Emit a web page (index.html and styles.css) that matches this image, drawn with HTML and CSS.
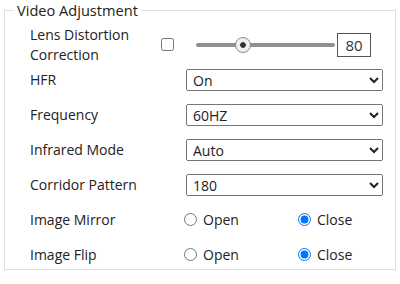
FILE: index.html
```html
<!DOCTYPE html>
<html>
<head>
<meta charset="utf-8">
<link rel="stylesheet" href="styles.css">
</head>
<body>
<fieldset class="panel">
  <legend class="panel-title">Video Adjustment</legend>
  <div class="row">
    <div class="label label-lens">Lens Distortion Correction</div>
    <input type="checkbox" class="check">
    <input type="range" class="slider" min="0" max="255" value="80">
    <input type="text" class="num" value="80">
  </div>
  <div class="row">
    <div class="label">HFR</div>
    <select class="sel"><option>On</option></select>
  </div>
  <div class="row">
    <div class="label">Frequency</div>
    <select class="sel"><option>60HZ</option></select>
  </div>
  <div class="row">
    <div class="label">Infrared Mode</div>
    <select class="sel"><option>Auto</option></select>
  </div>
  <div class="row">
    <div class="label">Corridor Pattern</div>
    <select class="sel"><option>180</option></select>
  </div>
  <div class="row">
    <div class="label">Image Mirror</div>
    <label class="opt opt-first"><input type="radio" name="mirror" class="radio">Open</label>
    <label class="opt"><input type="radio" name="mirror" class="radio" checked>Close</label>
  </div>
  <div class="row">
    <div class="label">Image Flip</div>
    <label class="opt opt-first"><input type="radio" name="flip" class="radio">Open</label>
    <label class="opt"><input type="radio" name="flip" class="radio" checked>Close</label>
  </div>
</fieldset>
</body>
</html>
```

FILE: styles.css
```css
html, body {
  margin: 0;
  padding: 0;
  background: #fff;
}
body {
  font-family: "Open Sans", "Noto Sans", sans-serif;
  font-size: 14px;
  color: #222;
}
.panel {
  margin: 0 4px;
  width: 392px;
  min-width: 0;
  min-inline-size: 0;
  height: 270px;
  box-sizing: border-box;
  border: 1px solid #dcdfe3;
  padding: 7px 0 0 0;
}
.panel-title {
  margin-left: 9px;
  padding: 0 3px;
  font-size: 14.6px;
  line-height: 20px;
}
.row {
  display: flex;
  align-items: center;
  height: 35px;
}
.label {
  width: 181px;
  flex: none;
  padding-left: 25px;
  box-sizing: border-box;
  line-height: 20px;
}
.label-lens {
  width: 156px;
  padding-right: 26px;
}
.check {
  margin: 0;
  width: 13px;
  height: 13px;
}
.slider {
  -webkit-appearance: none;
  appearance: none;
  margin: 0 0 0 22px;
  width: 139px;
  height: 18px;
  background: transparent;
}
.slider::-webkit-slider-runnable-track {
  height: 4px;
  background: #8f8f8f;
  border-radius: 2px;
}
.slider::-webkit-slider-thumb {
  -webkit-appearance: none;
  appearance: none;
  width: 16px;
  height: 16px;
  margin-top: -6px;
  border-radius: 50%;
  border: 1px solid #8a8a8a;
  box-sizing: border-box;
  background: radial-gradient(circle, #333 0, #333 2.5px, #f0f0f0 3.2px);
}
.num {
  margin-left: 2px;
  width: 34px;
  height: 24px;
  box-sizing: border-box;
  border: 1px solid #555;
  padding: 0;
  text-align: center;
  font-family: inherit;
  font-size: 15px;
  color: #333;
}
.sel {
  width: 197px;
  height: 22px;
  font-family: inherit;
  font-size: 14px;
  color: #222;
  padding: 0 2px;
}
.opt {
  display: flex;
  align-items: center;
}
.opt-first {
  width: 114px;
  margin-left: -2px;
}
.radio {
  margin: 0 6px 0 0;
  width: 13px;
  height: 13px;
}
```
